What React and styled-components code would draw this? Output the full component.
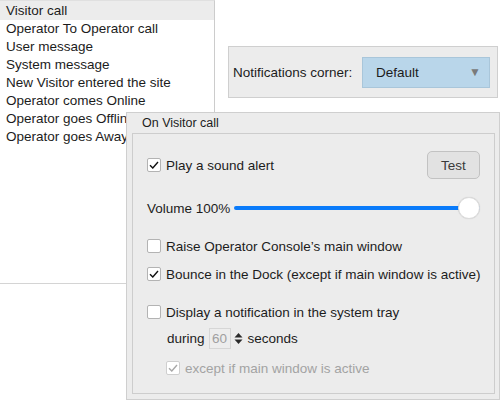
import React from "react";
import styled, { createGlobalStyle } from "styled-components";

const Global = createGlobalStyle`
  html, body { margin: 0; padding: 0; background: #ffffff; }
  body { font-family: "Liberation Sans", Arial, sans-serif; color: #1c1c1c; }
  * { box-sizing: border-box; }
`;

const Desktop = styled.div`
  position: relative;
  width: 500px;
  height: 400px;
  overflow: hidden;
  background: #ffffff;
`;

const Window = styled.div`
  position: absolute;
  left: ${(p) => p.$x}px;
  top: ${(p) => p.$y}px;
  width: ${(p) => p.$w}px;
  height: ${(p) => p.$h}px;
`;

const ListPanel = styled.ul`
  margin: 0;
  padding: 0;
  list-style: none;
  width: 100%;
  height: 100%;
  background: #ffffff;
  border-right: 1px solid #cccccc;
  border-bottom: 1px solid #d4d4d4;
  border-top: 1px solid #e0e0e0;
`;

const ListItem = styled.li`
  height: 18px;
  line-height: 18px;
  padding-left: 6px;
  font-size: 13.5px;
  white-space: nowrap;
  background: ${(p) => (p.$selected ? "#ececec" : "transparent")};
  ${(p) => p.$selected && "height: 19px; line-height: 19px;"}
`;

const CornerPanel = styled.div`
  width: 100%;
  height: 100%;
  background: #ececec;
  border: 1px solid #cfcfcf;
  display: flex;
  align-items: center;
  padding: 0 7px 0 4px;
`;

const Label = styled.span`
  font-size: 13.5px;
  white-space: nowrap;
`;

const Combo = styled.div`
  width: 128px;
  margin-left: auto;
  height: 31px;
  background: #b9d6ea;
  border: 1px solid #a9c6da;
  display: flex;
  align-items: center;
  justify-content: space-between;
  padding: 0 8px 0 13px;
  font-size: 13.5px;
`;

const ComboArrow = styled.span`
  font-size: 12px;
  color: #7a7a7a;
`;

const Dialog = styled.div`
  width: 100%;
  height: 100%;
  background: #ececec;
  border: 1px solid #cfcfcf;
  display: flex;
  flex-direction: column;
  padding: 0 4px 5px 5px;
`;

const GroupTitle = styled.div`
  height: 20px;
  line-height: 20px;
  font-size: 12.5px;
  padding-left: 10px;
`;

const GroupBox = styled.div`
  flex: 1;
  border: 1px solid #cdcdcd;
  display: flex;
  flex-direction: column;
  padding: 0 14px 0 14px;
`;

const Row = styled.div`
  display: flex;
  align-items: center;
  height: ${(p) => p.$h || 20}px;
  margin-top: ${(p) => p.$mt || 0}px;
  padding-left: ${(p) => p.$indent || 0}px;
  gap: ${(p) => p.$gap ?? 5}px;
  font-size: 13.5px;
  color: ${(p) => (p.$disabled ? "#a3a3a3" : "#1c1c1c")};
  white-space: nowrap;
`;

const Box = styled.span`
  width: 14px;
  height: 14px;
  flex: none;
  background: #ffffff;
  border: 1px solid ${(p) => (p.$disabled ? "#cfcfcf" : "#b3b3b3")};
  border-radius: 2px;
  display: flex;
  align-items: center;
  justify-content: center;
`;

const Spacer = styled.span`
  flex: 1;
`;

const Button = styled.button`
  width: 53px;
  height: 28px;
  border: 1px solid #c2c2c2;
  border-radius: 5px;
  background: #e2e2e2;
  font-family: "Liberation Sans", Arial, sans-serif;
  font-size: 13.5px;
  color: #3a3a3a;
  padding: 0;
`;

const Slider = styled.div`
  position: relative;
  flex: 1;
  height: 22px;
  display: flex;
  align-items: center;
`;

const Track = styled.div`
  height: 4px;
  width: 100%;
  background: #0a7bfa;
  border-radius: 2px;
`;

const Knob = styled.div`
  position: absolute;
  right: 0;
  top: 0;
  width: 22px;
  height: 22px;
  border-radius: 50%;
  background: #ffffff;
  border: 1px solid #dcdcdc;
  box-shadow: 0 0 1px rgba(0, 0, 0, 0.15);
`;

const SpinBox = styled.span`
  display: flex;
  align-items: center;
  gap: 2px;
`;

const SpinField = styled.span`
  width: 22px;
  height: 21px;
  border: 1px solid #d6d6d6;
  background: #ededed;
  color: #a0a0a0;
  font-size: 13.5px;
  display: flex;
  align-items: center;
  justify-content: center;
`;

const Check = ({ color = "#111" }) => (
  <svg width="10" height="8" viewBox="0 0 10 8">
    <path d="M1 4.2 L3.8 7 L9 1" fill="none" stroke={color} strokeWidth="1.4" />
  </svg>
);

const Checkbox = ({ checked, disabled }) => (
  <Box $disabled={disabled}>
    {checked && <Check color={disabled ? "#a8a8a8" : "#111"} />}
  </Box>
);

const Stepper = () => (
  <svg width="11" height="15" viewBox="0 0 11 15">
    <path d="M1.5 6.5 L5.5 2 L9.5 6.5 Z" fill="#2a2a2a" />
    <path d="M1.5 8.5 L5.5 13 L9.5 8.5 Z" fill="#2a2a2a" />
  </svg>
);

const events = [
  "Visitor call",
  "Operator To Operator call",
  "User message",
  "System message",
  "New Visitor entered the site",
  "Operator comes Online",
  "Operator goes Offline",
  "Operator goes Away",
];

export default function App() {
  return (
    <>
      <Global />
      <Desktop>
        <Window $x={0} $y={0} $w={215} $h={284}>
          <ListPanel>
            {events.map((e, i) => (
              <ListItem key={e} $selected={i === 0}>
                {e}
              </ListItem>
            ))}
          </ListPanel>
        </Window>

        <Window $x={228} $y={46} $w={270} $h={52}>
          <CornerPanel>
            <Label>Notifications corner:</Label>
            <Combo>
              <span>Default</span>
              <ComboArrow>▼</ComboArrow>
            </Combo>
          </CornerPanel>
        </Window>

        <Window $x={126} $y={112} $w={374} $h={288}>
          <Dialog>
            <GroupTitle>On Visitor call</GroupTitle>
            <GroupBox>
              <Row $h={28} $mt={17}>
                <Checkbox checked />
                <span>Play a sound alert</span>
                <Spacer />
                <Button>Test</Button>
              </Row>
              <Row $h={22} $mt={18} $gap={4}>
                <span>Volume 100%</span>
                <Slider>
                  <Track />
                  <Knob />
                </Slider>
              </Row>
              <Row $mt={17}>
                <Checkbox />
                <span>Raise Operator Console’s main window</span>
              </Row>
              <Row $mt={8}>
                <Checkbox checked />
                <span>Bounce in the Dock (except if main window is active)</span>
              </Row>
              <Row $mt={18}>
                <Checkbox />
                <span>Display a notification in the system tray</span>
              </Row>
              <Row $h={22} $mt={5} $indent={20} $gap={4}>
                <span>during</span>
                <SpinBox>
                  <SpinField>60</SpinField>
                  <Stepper />
                </SpinBox>
                <span>seconds</span>
              </Row>
              <Row $mt={9} $indent={19} $disabled>
                <Checkbox checked disabled />
                <span>except if main window is active</span>
              </Row>
            </GroupBox>
          </Dialog>
        </Window>
      </Desktop>
    </>
  );
}
